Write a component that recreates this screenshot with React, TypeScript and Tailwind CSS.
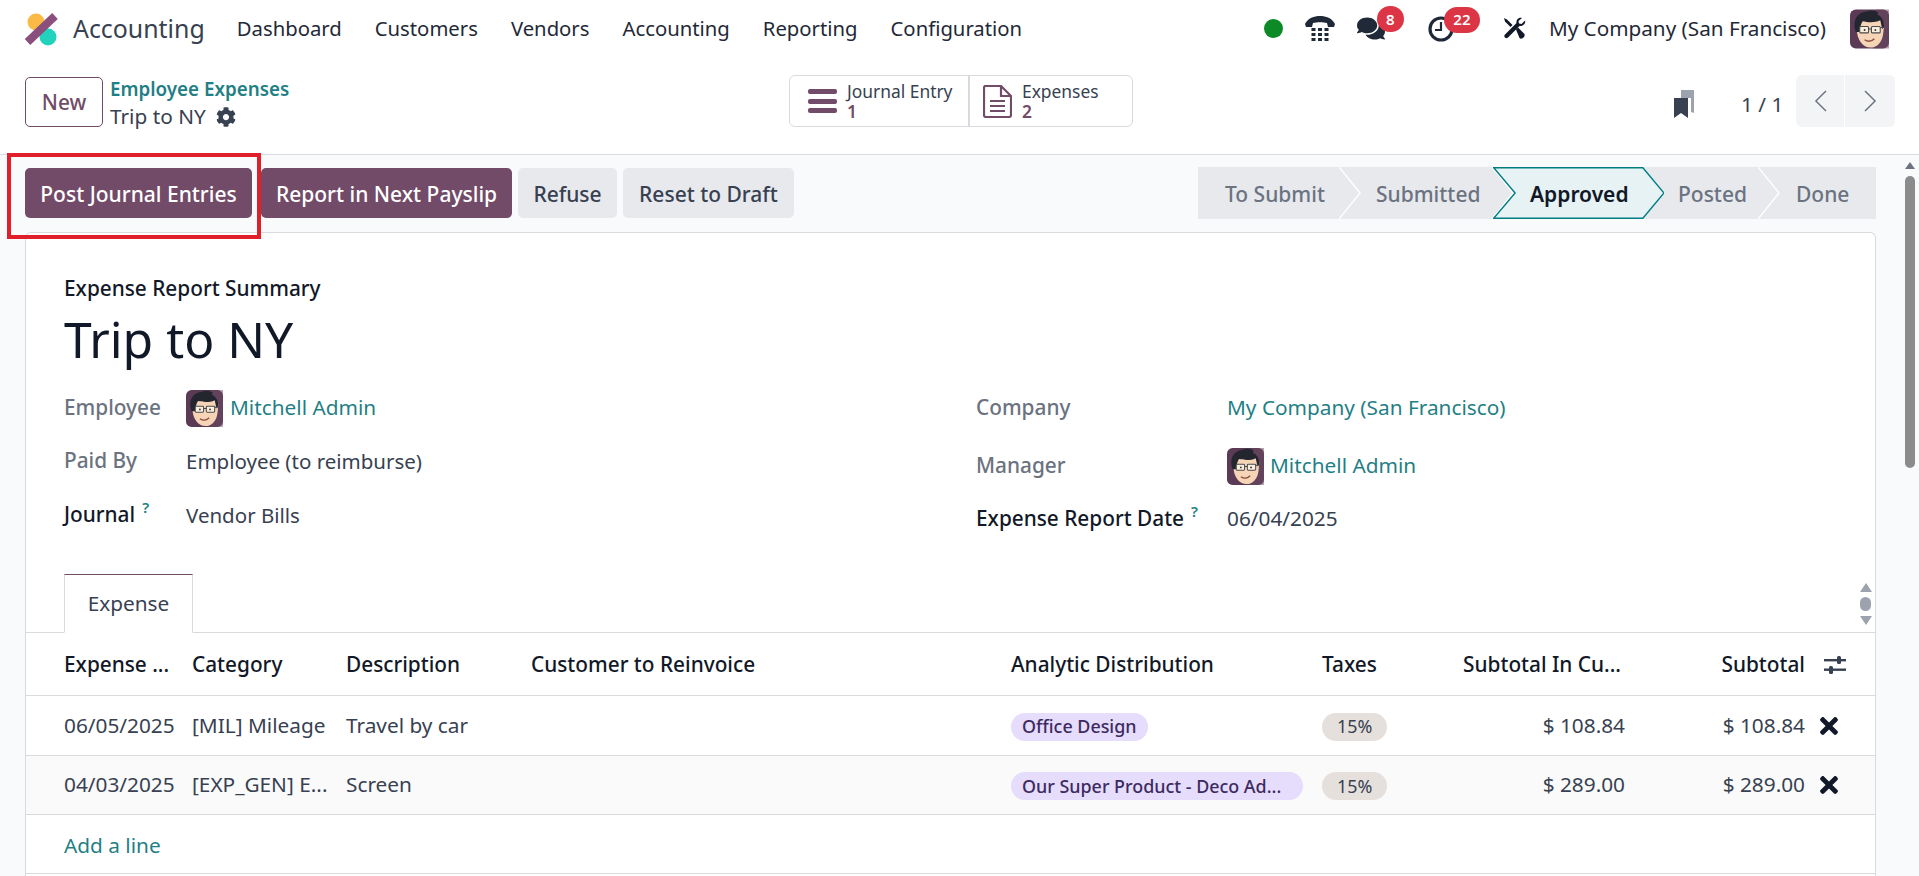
import React from 'react'
import { FaComments, FaCog, FaTimes } from 'react-icons/fa'

const Avatar = ({ className }: { className: string }) => (
  <svg viewBox="0 0 40 40" className={className}>
    <rect width="40" height="40" rx="6" fill="#5b3a55" />
    <path d="M27 0h13v40H24z" fill="#6b4a63" opacity=".5" />
    <path d="M7 20c0 11 6 19 14 19 7 0 12-6 13-14l1-9-3-6H11z" fill="#f5d5b5" />
    <path d="M6 23C2 12 7 3 17 2c4-2 9-1 12 1l-1 2c5 2 7 7 7 13l-2 2-2-9c-6 3-13 2-18 1-2 3-3 7-3 11z" fill="#23262f" />
    <rect x="10" y="17.5" width="9" height="6.5" rx="1" fill="#fbeedd" stroke="#4a4a4f" strokeWidth="1.1" />
    <rect x="22" y="17.5" width="9" height="6.5" rx="1" fill="#fbeedd" stroke="#4a4a4f" strokeWidth="1.1" />
    <path d="M19 20h3M31 19l3-1" stroke="#4a4a4f" strokeWidth="1.1" />
    <circle cx="15" cy="21" r="1" fill="#333" />
    <circle cx="26" cy="21" r="1" fill="#333" />
    <path d="M15 31c3 2 7 2 10-1" stroke="#8a4a3c" strokeWidth="1.4" fill="none" />
  </svg>
)

const Logo = () => (
  <svg viewBox="0 0 36 34" className="h-[34px] w-[36px]">
    <circle cx="12" cy="10" r="8.5" fill="#fbb945" />
    <circle cx="24" cy="25" r="8.5" fill="#21d3bd" />
    <path d="M3.5 30 31 4" stroke="#8a4f7d" strokeWidth="8" />
  </svg>
)

const PhoneIcon = () => (
  <svg viewBox="0 0 30 25" className="h-[25px] w-[30px]" fill="#1f2937">
    <path d="M0 8C3 2 9 0 15 0s12 2 15 8l-1 3h-6l-1-4c-4-1-10-1-14 0l-1 4H1z" />
    <g>
      <rect x="6.5" y="12" width="4" height="3" />
      <rect x="13" y="12" width="4" height="3" />
      <rect x="19.5" y="12" width="4" height="3" />
      <rect x="6.5" y="17" width="4" height="3" />
      <rect x="13" y="17" width="4" height="3" />
      <rect x="19.5" y="17" width="4" height="3" />
      <rect x="6.5" y="22" width="4" height="3" />
      <rect x="13" y="22" width="4" height="3" />
      <rect x="19.5" y="22" width="4" height="3" />
    </g>
  </svg>
)

const ClockIcon = () => (
  <svg viewBox="0 0 26 26" className="h-[26px] w-[26px]" fill="none" stroke="#1f2937">
    <circle cx="13" cy="13" r="11" strokeWidth="3.2" />
    <path d="M13 6v8H7" strokeWidth="2.2" />
  </svg>
)

const ToolsIcon = () => (
  <svg viewBox="0 0 24 23" className="h-[23px] w-[24px]" fill="#111827">
    <path d="M2 1 5 2.500 10.500 8l-2 2L3 4.500z" />
    <path d="M14 12.500 16 10.500l6 6c1.500 1.500 0 3.500-.5 4-.5.5-2.500 2-4 .5z" />
    <path d="M23 3.500c1 3-2 6-5.500 5.500L6 20.500c-2 2-5-1-3-3L14.500 6c-.5-3 2-6 5.500-5l-3.500 3 .5 2.500 2.500.5z" />
  </svg>
)

const BookmarkIcon = () => (
  <svg viewBox="0 0 20 28" className="h-[28px] w-[20px]">
    <path d="M7 0h13v23l-3-1V8H7z" fill="#9ca3af" />
    <path d="M0 8h14v20l-7-5-7 5z" fill="#374151" />
  </svg>
)

const OptionsIcon = () => (
  <svg viewBox="0 0 22 20" className="h-[20px] w-[22px]" fill="#374151">
    <rect x="0" y="4" width="22" height="2.4" />
    <rect x="0" y="13.5" width="22" height="2.4" />
    <rect x="13" y="1" width="4" height="8" rx="1.5" />
    <rect x="5" y="11" width="4" height="8" rx="1.5" />
  </svg>
)

const Chevron = ({ stroke = '#ffffff' }: { stroke?: string }) => (
  <svg viewBox="0 0 22 52" preserveAspectRatio="none" className="absolute right-[-21px] top-[-3px] z-10 h-[52px] w-[22px]">
    <path d="M0 0 21 26 0 52" fill="none" stroke={stroke} strokeWidth="1.4" />
  </svg>
)

const navItems = ['Dashboard', 'Customers', 'Vendors', 'Accounting', 'Reporting', 'Configuration']

const Nav = () => (
  <div className="flex h-[57px] shrink-0 items-center bg-white pl-[24px] text-[#374151]">
    <Logo />
    <span className="ml-[13px] mr-[32px] text-[24.9px] text-[#374151]">Accounting</span>
    <div className="flex gap-[33px] text-[20.3px] text-[#1f2937]">
      {navItems.map((n) => (
        <span key={n}>{n}</span>
      ))}
    </div>
    <div className="ml-auto flex items-center pr-[30px]">
      <span className="h-[19px] w-[19px] rounded-full bg-[#0b8a26]" />
      <span className="ml-[22px] flex"><PhoneIcon /></span>
      <span className="relative ml-[22px] flex text-[#1f2937]">
        <FaComments className="h-[27px] w-[28px]" />
        <span className="absolute left-[20px] top-[-9px] flex h-[26px] w-[27px] items-center justify-center rounded-full bg-[#dc3545] text-[15px] font-semibold text-white">8</span>
      </span>
      <span className="relative ml-[43px] flex">
        <ClockIcon />
        <span className="absolute left-[16px] top-[-9px] flex h-[26px] w-[36px] items-center justify-center rounded-full bg-[#dc3545] text-[15px] font-semibold text-white">22</span>
      </span>
      <span className="ml-[48px] flex"><ToolsIcon /></span>
      <span className="ml-[23px] text-[20.7px] text-[#1f2937]">My Company (San Francisco)</span>
      <Avatar className="ml-[24px] h-[40px] w-[39px]" />
    </div>
  </div>
)

const ControlPanel = () => (
  <div className="relative flex h-[98px] shrink-0 border-b border-[#d8dadd] bg-white pl-[25px]">
    <button className="mt-[20px] h-[50px] w-[78px] rounded-[5px] border border-[#714b67] pt-[2px] text-[20.8px] font-medium text-[#714b67]">New</button>
    <div className="ml-[7px] mt-[18px] flex w-[679px] flex-col">
      <span className="text-[18.8px] font-semibold leading-[28px] text-[#1f7f85]">Employee Expenses</span>
      <span className="flex items-center gap-[10px] text-[20.8px] leading-[27px] text-[#374151]">
        Trip to NY <FaCog className="h-[20px] w-[20px] text-[#374151]" />
      </span>
    </div>
    <div className="mt-[18px] flex h-[52px] w-[344px] rounded-[6px] border border-[#d8dadd]">
      <div className="flex w-[180px] items-center border-r-2 border-[#d8dadd] pl-[18px]">
        <div className="flex flex-col gap-[4.5px]">
          <span className="h-[5px] w-[29px] rounded-[2px] bg-[#714b67]" />
          <span className="h-[5px] w-[29px] rounded-[2px] bg-[#714b67]" />
          <span className="h-[5px] w-[29px] rounded-[2px] bg-[#714b67]" />
        </div>
        <div className="ml-[10px] flex flex-col text-[17.4px] leading-[20px] text-[#374151]">
          <span>Journal Entry</span>
          <span className="font-semibold text-[#714b67]">1</span>
        </div>
      </div>
      <div className="flex items-center pl-[13px]">
        <svg viewBox="0 0 29 33" className="h-[33px] w-[29px]" fill="none" stroke="#714b67" strokeWidth="2.2">
          <path d="M2 1h16l10 10v19a2 2 0 0 1-2 2H3a2 2 0 0 1-2-2V2z" />
          <path d="M18 1v10h10M7 16h15M7 21h15M7 26h15" />
        </svg>
        <div className="ml-[10px] flex flex-col text-[17.4px] leading-[20px] text-[#374151]">
          <span>Expenses</span>
          <span className="font-semibold text-[#714b67]">2</span>
        </div>
      </div>
    </div>
    <div className="ml-[541px] mt-[33px] flex h-[28px]"><BookmarkIcon /></div>
    <span className="ml-[47px] mt-[33px] text-[20.8px] leading-[28px] text-[#374151]">1 / 1</span>
    <div className="ml-[13px] mt-[18px] flex h-[52px] w-[99px] rounded-[6px] bg-[#f3f4f6]">
      <span className="flex w-[49px] items-center justify-center border-r border-white">
        <svg viewBox="0 0 14 24" className="h-[22px] w-[13px]" fill="none" stroke="#6b7280" strokeWidth="1.6"><path d="M13 1 2 12l11 11" /></svg>
      </span>
      <span className="flex flex-1 items-center justify-center">
        <svg viewBox="0 0 14 24" className="h-[22px] w-[13px]" fill="none" stroke="#6b7280" strokeWidth="1.6"><path d="m1 1 11 11L1 23" /></svg>
      </span>
    </div>
  </div>
)

const StatusBar = () => (
  <div className="flex h-[52px] w-[678px] bg-[#e7e9ed] pt-[3px] text-[21px] font-medium text-[#6b7280]">
    <div className="relative flex w-[142px] items-center pl-[27px]">To Submit<Chevron /></div>
    <div className="relative flex w-[153px] items-center pl-[36px]">Submitted<Chevron /></div>
    <div className="relative flex w-[149px] items-center pl-[37px] font-semibold text-[#111827]">
      <svg viewBox="0 0 170 52" preserveAspectRatio="none" className="absolute left-0 top-[-3px] z-20 h-[52px] w-[171px]">
        <path d="M.7.7H149l21 25.3-21 25.3H.7L22 26z" fill="#e6f2f3" stroke="#017e84" strokeWidth="1.4" />
      </svg>
      <span className="relative z-30">Approved</span>
    </div>
    <div className="relative flex w-[117px] items-center pl-[36px]">Posted<Chevron /></div>
    <div className="relative flex flex-1 items-center pl-[37px]">Done</div>
  </div>
)

const ActionBar = () => (
  <div className="flex h-[52px] items-center text-[21px] font-medium">
    <button className="h-[50px] w-[227px] rounded-[5px] bg-[#714b67] pt-[3px] text-white">Post Journal Entries</button>
    <button className="ml-[9px] h-[50px] w-[251px] rounded-[5px] bg-[#714b67] pt-[3px] text-white">Report in Next Payslip</button>
    <button className="ml-[6px] h-[50px] w-[99px] rounded-[5px] bg-[#e7e9ed] pt-[3px] text-[#374151]">Refuse</button>
    <button className="ml-[6px] h-[50px] w-[171px] rounded-[5px] bg-[#e7e9ed] pt-[3px] text-[#374151]">Reset to Draft</button>
    <div className="ml-auto"><StatusBar /></div>
  </div>
)

const Field = ({ label, strong, help, width, mt, children }: { label: string; strong?: boolean; help?: boolean; width: string; mt?: string; children: React.ReactNode }) => (
  <div className={`flex h-[38px] items-center ${mt ?? ''}`}>
    <span className={`${width} ${strong ? 'font-medium text-[#111827]' : 'font-medium text-[#6b7280]'} flex items-start`}>
      {label}
      {help && <span className="ml-[7px] mt-[1px] text-[15px] font-semibold leading-[15px] text-[#1f7f85]">?</span>}
    </span>
    <div className="flex items-center text-[#374151]">{children}</div>
  </div>
)

const rowCols = 'grid grid-cols-[128px_154px_185px_480px_311px_128px_175px_180px_1fr] items-center pl-[38px] border-b border-[#d8dadd]'

const Tag = ({ children, tone, className }: { children: React.ReactNode; tone: 'purple' | 'tax'; className?: string }) => (
  <span className={`inline-flex h-[28px] items-center rounded-full text-[17.9px] ${tone === 'purple' ? 'bg-[#e6dcfb] px-[11px] font-medium text-[#3c2a60]' : 'bg-[#e6e0dd] px-[15px] text-[#374151]'} ${className ?? ''}`}>
    {children}
  </span>
)

const ExpenseRow = ({ date, cat, desc, tag, tagClass, amount, alt, h }: { date: string; cat: string; desc: string; tag: string; tagClass?: string; amount: string; alt?: boolean; h: string }) => (
  <div className={`${rowCols} ${h} ${alt ? 'bg-[#fafafa]' : ''} text-[#374151]`}>
    <span>{date}</span>
    <span>{cat}</span>
    <span>{desc}</span>
    <span />
    <span className="flex pt-[2px]"><Tag tone="purple" className={tagClass}>{tag}</Tag></span>
    <span className="flex pt-[2px]"><Tag tone="tax">15%</Tag></span>
    <span className="text-right">{amount}</span>
    <span className="text-right">{amount}</span>
    <span className="flex pl-[15px]"><FaTimes className="h-[26px] w-[18px] text-[#111827]" /></span>
  </div>
)

const Sheet = () => (
  <div className="mt-[13px] rounded-t-[6px] border border-b-0 border-[#d8dadd] bg-white">
    <div className="pl-[38px] pt-[41px]">
      <div className="text-[20.8px] font-medium leading-[28px] text-[#111827]">Expense Report Summary</div>
      <div className="mt-[7px] text-[49.8px] leading-[60px] text-[#111827]">Trip to NY</div>
      <div className="mt-[20px] flex">
        <div className="w-[912px]">
          <Field label="Employee" width="w-[122px]">
            <Avatar className="h-[37px] w-[37px]" />
            <span className="ml-[7px] text-[#1f7f85]">Mitchell Admin</span>
          </Field>
          <Field label="Paid By" width="w-[122px]" mt="mt-[15px]"><span className="text-[20.5px]">Employee (to reimburse)</span></Field>
          <Field label="Journal" strong help width="w-[122px]" mt="mt-[16px]"><span className="text-[20.5px]">Vendor Bills</span></Field>
        </div>
        <div>
          <Field label="Company" width="w-[251px]">
            <span className="text-[#1f7f85]">My Company (San Francisco)</span>
          </Field>
          <Field label="Manager" width="w-[251px]" mt="mt-[20px]">
            <Avatar className="h-[37px] w-[37px]" />
            <span className="ml-[6px] text-[#1f7f85]">Mitchell Admin</span>
          </Field>
          <Field label="Expense Report Date" strong help width="w-[251px]" mt="mt-[15px]">06/04/2025</Field>
        </div>
      </div>
    </div>
    <div className="mt-[36px] flex h-[59px] items-end justify-between border-b border-[#d8dadd] pl-[38px]">
      <div className="-mb-px flex h-[59px] w-[129px] items-center justify-center border border-b-white border-[#d8dadd] border-t-[#714b67] text-[#374151]">Expense</div>
      <div className="flex h-[59px] w-[19px] flex-col items-center justify-center gap-[5px] bg-white pt-[2px]">
        <span className="h-0 w-0 border-x-[6px] border-b-[9px] border-x-transparent border-b-[#9ca3af]" />
        <span className="h-[14px] w-[11px] rounded-full bg-[#9ca3af]" />
        <span className="h-0 w-0 border-x-[6px] border-t-[9px] border-x-transparent border-t-[#9ca3af]" />
      </div>
    </div>
    <div className={`${rowCols} relative h-[63px] pt-[2px] font-medium text-[#111827]`}>
      <span>Expense ...</span>
      <span>Category</span>
      <span>Description</span>
      <span>Customer to Reinvoice</span>
      <span>Analytic Distribution</span>
      <span>Taxes</span>
      <span className="pr-[4px] text-right">Subtotal In Cu...</span>
      <span className="text-right">Subtotal</span>
      <span className="flex pl-[19px]"><OptionsIcon /></span>
    </div>
    <ExpenseRow h="h-[60px]" date="06/05/2025" cat="[MIL] Mileage" desc="Travel by car" tag="Office Design" amount="$ 108.84" />
    <ExpenseRow h="h-[59px]" alt date="04/03/2025" cat="[EXP_GEN] E..." desc="Screen" tag="Our Super Product - Deco Ad..." tagClass="w-[292px]" amount="$ 289.00" />
    <div className="flex h-[59px] items-center border-b border-[#d8dadd] pl-[38px] pt-[4px] text-[#1f7f85]">Add a line</div>
    <div className="h-[4px]" />
  </div>
)

const App = () => (
  <div className="relative flex h-[876px] w-[1919px] flex-col overflow-hidden bg-white text-[20.8px] font-['Noto_Sans',sans-serif]">
    <Nav />
    <ControlPanel />
    <div className="flex flex-1 bg-[#f9fafb]">
      <div className="w-[1905px] pl-[25px] pr-[29px] pt-[12px]">
        <ActionBar />
        <Sheet />
      </div>
      <div className="flex w-[14px] flex-col items-center pt-[7px]">
        <span className="mr-[4px] h-0 w-0 border-x-[5px] border-b-[7px] border-x-transparent border-b-[#6b7280]" />
        <span className="mr-[4px] mt-[7px] h-[292px] w-[10px] rounded-full bg-[#8b8b8b]" />
      </div>
    </div>
    <div className="absolute left-[7px] top-[153px] h-[86px] w-[254px] border-[4px] border-[#e01f2a]" />
  </div>
)

export default App
